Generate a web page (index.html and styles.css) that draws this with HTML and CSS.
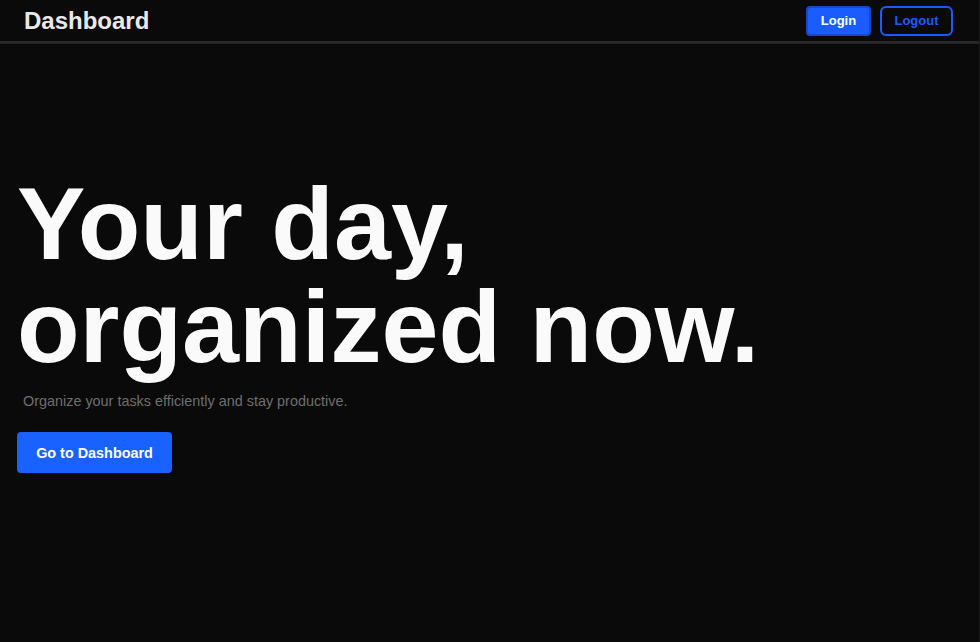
FILE: index.html
```html
<!DOCTYPE html>
<html lang="en">
<head>
<meta charset="utf-8">
<title>Dashboard</title>
<link rel="stylesheet" href="styles.css">
</head>
<body>
<div class="page">
  <header class="topbar">
    <h1 class="brand">Dashboard</h1>
    <nav class="actions">
      <button class="btn btn-login">Login</button>
      <button class="btn btn-logout">Logout</button>
    </nav>
  </header>
  <main class="hero">
    <h2 class="hero-title">Your day,<br>organized now.</h2>
    <p class="hero-sub">Organize your tasks efficiently and stay productive.</p>
    <div class="hero-cta">
      <button class="btn-primary">Go to Dashboard</button>
    </div>
  </main>
</div>
</body>
</html>
```

FILE: styles.css
```css
* { box-sizing: border-box; }
html, body {
  margin: 0;
  padding: 0;
  background: #0a0a0a;
  height: 100%;
}
body {
  font-family: "Liberation Sans", Arial, sans-serif;
  color: #fafafa;
}
.page {
  min-height: 642px;
  border-right: 1px solid #1a1a1a;
  width: 980px;
}
.topbar {
  height: 44px;
  display: flex;
  align-items: center;
  justify-content: space-between;
  padding: 0 26px 0 24px;
  border-bottom: 3px solid #262626;
}
.brand {
  margin: 0;
  font-size: 24px;
  font-weight: 700;
  color: #e8e8e8;
}
.actions {
  display: flex;
  gap: 9px;
}
.btn {
  font-family: "Liberation Sans", Arial, sans-serif;
  font-size: 13px;
  font-weight: 700;
  height: 30px;
  border-radius: 4px;
  cursor: pointer;
}
.btn-login {
  width: 65px;
  background: #1a5cff;
  color: #ffffff;
  border: 2px solid #1748c8;
}
.btn-logout {
  width: 73px;
  background: transparent;
  color: #1a5cff;
  border: 2px solid #1a5cff;
  border-radius: 6px;
}
.hero {
  padding: 128px 17px 0 17px;
}
.hero-title {
  margin: 0;
  font-size: 102.5px;
  line-height: 103px;
  font-weight: 700;
  color: #fafafa;
}
.hero-sub {
  margin: 12px 0 0 6px;
  font-size: 14.4px;
  line-height: 22px;
  color: #6e6e6e;
}
.hero-cta {
  margin-top: 20px;
}
.btn-primary {
  width: 155px;
  height: 41px;
  background: #1a62ff;
  color: #ffffff;
  border: none;
  border-radius: 4px;
  font-family: "Liberation Sans", Arial, sans-serif;
  font-size: 14.4px;
  font-weight: 700;
  cursor: pointer;
}
```
